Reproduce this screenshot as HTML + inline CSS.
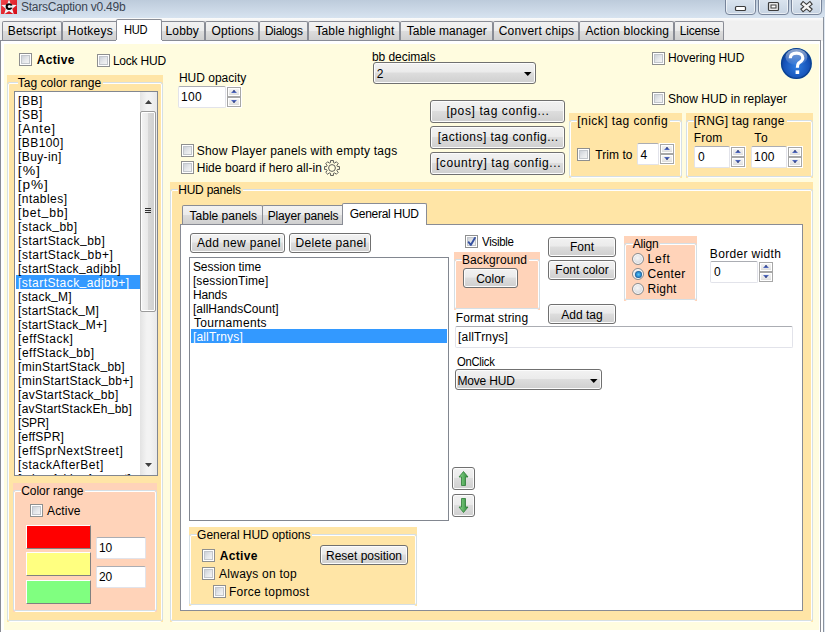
<!DOCTYPE html>
<html><head><meta charset="utf-8"><style>
*,*::before,*::after{margin:0;padding:0;box-sizing:border-box}
html,body{width:825px;height:632px;overflow:hidden;background:#fff;position:relative;font-family:"Liberation Sans",sans-serif}
.a{position:absolute}
.t{position:absolute;font-size:12px;line-height:14px;white-space:nowrap;color:#000}
.cb{position:absolute;width:13px;height:13px;border:1px solid #8e8f8f;background:#fff}
.cb::after{content:"";position:absolute;left:1px;top:1px;width:9px;height:9px;border:1px solid #c2c6cc;background:linear-gradient(135deg,#cdd1d8 0%,#e6e8eb 55%,#f4f4f4 100%)}
.btn{position:absolute;border:1px solid #707070;border-radius:3px;background:linear-gradient(#f2f2f2 0%,#ebebeb 45%,#dddddd 50%,#cfcfcf 100%);box-shadow:inset 0 0 0 1px #fcfcfc}
.ed{position:absolute;background:#fff;border:1px solid #e2e3ea;border-top-color:#abadb3;border-radius:2px}
.spn{position:absolute;border:1px solid #a6a6a6;background:#fff}
.spn i{position:absolute;left:0;right:0;background:linear-gradient(#f3f3f3,#dadada);border:1px solid #fff}
.sh{position:absolute;width:12px;border:1px solid #fff;background:linear-gradient(#f2f2f2,#e4e4e4 85%,#d6d6d6)}
.gb{position:absolute;border:1px solid;border-radius:2px}
.lb{position:absolute;background:#fff;border:1px solid #828790}
.tab{position:absolute;top:21px;height:19px;border:1px solid #898c95;border-bottom:none;border-radius:2px 2px 0 0;background:linear-gradient(#f2f2f2 0%,#ebebeb 50%,#dddddd 51%,#cfcfcf 100%)}
.rd{position:absolute;width:12px;height:12px;border-radius:50%;border:1px solid #8a8c8e;box-shadow:inset 0 0 0 1px #fbfbfb;background:radial-gradient(circle at 45% 40%,#f6f6f6 0%,#dcdde0 60%,#c4c6ca 100%)}
</style></head><body>
<div class="a" style="left:0;top:0;width:825px;height:18px;background:linear-gradient(#bdcbdb,#d7e3f0)"></div>
<div class="a" style="left:0;top:18px;width:825px;height:23px;background:linear-gradient(#fbfbfb 0px,#f6f6f6 2px,#f0f0f0 3px)"></div>
<div class="t" style="left:20.90px;top:-0.1px;letter-spacing:-0.222px;color:#3b4552">StarsCaption v0.49b</div>
<svg class="a" style="left:0px;top:0" width="18" height="15"><defs><linearGradient id="ig" x1="0" y1="0" x2="1" y2="1"><stop offset="0" stop-color="#f2494f"/><stop offset="1" stop-color="#d40a14"/></linearGradient></defs><rect x="1" y="0" width="16" height="14" fill="url(#ig)"/><polygon points="9.00,-0.60 11.00,4.85 16.80,5.07 12.23,8.65 13.82,14.23 9.00,11.00 4.18,14.23 5.77,8.65 1.20,5.07 7.00,4.85" fill="#eef6fa"/><circle cx="9" cy="6.6" r="3.4" fill="#050505"/><circle cx="9.3" cy="6.6" r="1.5" fill="#f0f0f0"/><rect x="10.3" y="5.6" width="2.6" height="2" fill="#eef6fa"/></svg>
<div class="a" style="left:725px;top:-3px;width:31px;height:18px;border:1px solid #77849a;border-radius:0 0 4px 4px;background:linear-gradient(#dde6f0,#c6d3e2);box-shadow:inset 0 0 0 1px rgba(255,255,255,0.6)"></div>
<div class="a" style="left:758px;top:-3px;width:31px;height:18px;border:1px solid #77849a;border-radius:0 0 4px 4px;background:linear-gradient(#dde6f0,#c6d3e2);box-shadow:inset 0 0 0 1px rgba(255,255,255,0.6)"></div>
<div class="a" style="left:791px;top:-3px;width:31px;height:18px;border:1px solid #77849a;border-radius:0 0 4px 4px;background:linear-gradient(#dde6f0,#c6d3e2);box-shadow:inset 0 0 0 1px rgba(255,255,255,0.6)"></div>
<svg class="a" style="left:725px;top:0" width="100" height="15"><rect x="10.5" y="6.5" width="10" height="4" rx="1" fill="#fff" stroke="#3c3c3c" stroke-width="1.2"/><rect x="43.5" y="2.5" width="10" height="8" rx="1" fill="#e8e8e8" stroke="#3c3c3c" stroke-width="1.2"/><rect x="46" y="5" width="5" height="3" fill="#fff" stroke="#3c3c3c" stroke-width="1"/><path d="M78.3,4 L84.7,9.3 M84.7,4 L78.3,9.3" stroke="#3c3c3c" stroke-width="4.6" stroke-linecap="square"/><path d="M78.3,4 L84.7,9.3 M84.7,4 L78.3,9.3" stroke="#f4f4f4" stroke-width="2.4" stroke-linecap="square"/></svg>
<div class="a" style="left:0;top:40px;width:821px;height:592px;border:1px solid #898c95;border-bottom:none;background:#fff"></div>
<div class="a" style="left:4px;top:44px;width:815px;height:586px;background:#fffcdf"></div>
<div class="a" style="left:823px;top:17px;width:1px;height:615px;background:#8a919c"></div>
<div class="a" style="left:824px;top:17px;width:1px;height:615px;background:#dfe8f2"></div>
<div class="tab" style="left:2px;width:60px"></div>
<div class="t" style="left:7.80px;top:24.2px;letter-spacing:0.200px;">Betscript</div>
<div class="tab" style="left:62px;width:56px"></div>
<div class="t" style="left:67.80px;top:24.2px;letter-spacing:0.267px;">Hotkeys</div>
<div class="tab" style="left:160px;width:45px"></div>
<div class="t" style="left:165.60px;top:24.2px;letter-spacing:0.100px;">Lobby</div>
<div class="tab" style="left:205px;width:54px"></div>
<div class="t" style="left:211.60px;top:24.2px;letter-spacing:0.133px;">Options</div>
<div class="tab" style="left:259px;width:49px"></div>
<div class="t" style="left:264.60px;top:24.2px;letter-spacing:-0.300px;transform:scaleX(0.9892);transform-origin:1px 0;">Dialogs</div>
<div class="tab" style="left:308px;width:92px"></div>
<div class="t" style="left:315.40px;top:24.2px;letter-spacing:0.150px;">Table highlight</div>
<div class="tab" style="left:400px;width:93px"></div>
<div class="t" style="left:406.70px;top:24.2px;letter-spacing:0.058px;">Table manager</div>
<div class="tab" style="left:493px;width:86px"></div>
<div class="t" style="left:498.80px;top:24.2px;letter-spacing:0.150px;">Convert chips</div>
<div class="tab" style="left:579px;width:95px"></div>
<div class="t" style="left:585.40px;top:24.2px;letter-spacing:0.207px;">Action blocking</div>
<div class="tab" style="left:674px;width:50px"></div>
<div class="t" style="left:679.70px;top:24.2px;letter-spacing:-0.183px;">License</div>
<div class="a" style="left:116px;top:19px;width:46px;height:22px;border:1px solid #898c95;border-bottom:none;border-radius:2px 2px 0 0;background:#fff"></div>
<div class="a" style="left:116px;top:40px;width:46px;height:4px;background:#fff"></div>
<div class="t" style="left:123.80px;top:23.0px;letter-spacing:-0.300px;transform:scaleX(0.9262);transform-origin:1px 0;">HUD</div>
<div class="cb" style="left:19px;top:53px"></div>
<div class="t" style="left:36.80px;top:53.0px;font-weight:bold;letter-spacing:0.320px;">Active</div>
<div class="cb" style="left:97px;top:54px"></div>
<div class="t" style="left:112.90px;top:54.0px;letter-spacing:-0.214px;">Lock HUD</div>
<div class="t" style="left:178.90px;top:70.6px;">HUD opacity</div>
<div class="ed" style="left:178px;top:86px;width:48px;height:22px"></div>
<div class="t" style="left:181.00px;top:89.8px;letter-spacing:0.300px;">100</div>
<div class="a" style="left:226px;top:86px;width:16px;height:22px;background:#fff"></div>
<div class="a" style="left:227px;top:87px;width:14px;height:20px;background:#a7a7a7"></div>
<div class="sh" style="left:228px;top:88px;height:8px"></div>
<div class="sh" style="left:228px;top:98px;height:8px"></div>
<svg class="a" style="left:226px;top:86px" width="16" height="22"><path d="M5,7 L8,4 L11,7Z" fill="#4f68c0"/><path d="M6.5,5.5 L8,4 L9.5,5.5Z" fill="#2b3566"/><path d="M5,14 L8,17 L11,14Z" fill="#4f68c0"/><path d="M6.5,15.5 L8,17 L9.5,15.5Z" fill="#2b3566"/></svg>
<div class="t" style="left:372.00px;top:49.7px;letter-spacing:-0.060px;">bb decimals</div>
<div class="btn" style="left:373px;top:62px;width:163px;height:22px"></div>
<div class="t" style="left:376.80px;top:66.7px;">2</div>
<svg class="a" style="left:523.7px;top:72px" width="8" height="4"><path d="M0,0 L7.5,0 L3.75,4Z" fill="#000"/></svg>
<div class="cb" style="left:652px;top:52px"></div>
<div class="t" style="left:667.90px;top:51.0px;letter-spacing:-0.082px;">Hovering HUD</div>
<div class="cb" style="left:652px;top:92px"></div>
<div class="t" style="left:667.90px;top:91.8px;letter-spacing:0.021px;">Show HUD in replayer</div>
<svg class="a" style="left:779px;top:46px" width="35" height="35" viewBox="0 0 35 35"><defs><radialGradient id="hg" cx="50%" cy="60%" r="60%"><stop offset="0" stop-color="#2f7de0"/><stop offset="0.7" stop-color="#1552b8"/><stop offset="1" stop-color="#0a3a8c"/></radialGradient><linearGradient id="hl" x1="0" y1="0" x2="0" y2="1"><stop offset="0" stop-color="#ffffff" stop-opacity="0.55"/><stop offset="1" stop-color="#ffffff" stop-opacity="0.05"/></linearGradient></defs><circle cx="17.4" cy="17.5" r="15.6" fill="#6fd0ff" opacity="0.6"/><circle cx="17.4" cy="17.5" r="14.8" fill="url(#hg)" stroke="#0b3f8e" stroke-width="1.3"/><ellipse cx="17.4" cy="11" rx="11" ry="8" fill="url(#hl)"/><path d="M11.3,12.2 C11.3,8.6 14,7.2 17.6,7.2 C21.4,7.2 23.8,9.2 23.8,12 C23.8,14.8 21.2,15.8 19.6,17.2 C18.6,18.2 18.4,19.2 18.4,21.8" stroke="#fff" stroke-width="3.2" fill="none"/><rect x="16.6" y="24.4" width="3.6" height="3.6" fill="#fff"/></svg>
<div class="cb" style="left:181px;top:144px"></div>
<div class="t" style="left:196.70px;top:144.3px;letter-spacing:0.233px;">Show Player panels with empty tags</div>
<div class="cb" style="left:181px;top:161px"></div>
<div class="t" style="left:196.70px;top:160.5px;letter-spacing:0.046px;">Hide board if hero all-in</div>
<svg class="a" style="left:323px;top:159px" width="18" height="18" viewBox="0 0 18 18"><g fill="none" stroke="#4a4a4a" stroke-width="0.9"><path d="M7.55,3.59 L7.55,1.54 L10.45,1.54 L10.45,3.59 L11.80,4.15 L13.25,2.70 L15.30,4.75 L13.85,6.20 L14.41,7.55 L16.46,7.55 L16.46,10.45 L14.41,10.45 L13.85,11.80 L15.30,13.25 L13.25,15.30 L11.80,13.85 L10.45,14.41 L10.45,16.46 L7.55,16.46 L7.55,14.41 L6.20,13.85 L4.75,15.30 L2.70,13.25 L4.15,11.80 L3.59,10.45 L1.54,10.45 L1.54,7.55 L3.59,7.55 L4.15,6.20 L2.70,4.75 L4.75,2.70 L6.20,4.15Z"/><circle cx="9" cy="9" r="3.4"/></g></svg>
<div class="btn" style="left:430px;top:100px;width:135px;height:23px"></div>
<div class="t" style="left:446.40px;top:104.4px;letter-spacing:0.611px;">[pos] tag config...</div>
<div class="btn" style="left:430px;top:126px;width:135px;height:23px"></div>
<div class="t" style="left:437.80px;top:130.4px;letter-spacing:0.468px;">[actions] tag config...</div>
<div class="btn" style="left:430px;top:152px;width:135px;height:23px"></div>
<div class="t" style="left:435.90px;top:156.4px;letter-spacing:0.600px;">[country] tag config...</div>
<div class="a" style="left:569px;top:113px;width:113px;height:65px;background:#ffe5a6"></div>
<div class="gb" style="left:570px;top:121px;width:111px;height:57px;border-color:#fff"></div>
<div class="gb" style="left:569px;top:120px;width:113px;height:57px;border-color:#d5dfe5"></div>
<div class="t" style="left:577.30px;top:114.4px;letter-spacing:0.431px;background:#ffe5a6;padding:0 2px 0 0">[nick] tag config</div>
<div class="cb" style="left:577px;top:148px"></div>
<div class="t" style="left:595.20px;top:147.5px;letter-spacing:0.067px;">Trim to</div>
<div class="ed" style="left:637px;top:143px;width:22px;height:22px"></div>
<div class="t" style="left:640.40px;top:147.5px;">4</div>
<div class="a" style="left:659px;top:143px;width:16px;height:22px;background:#fff"></div>
<div class="a" style="left:660px;top:144px;width:14px;height:20px;background:#a7a7a7"></div>
<div class="sh" style="left:661px;top:145px;height:8px"></div>
<div class="sh" style="left:661px;top:155px;height:8px"></div>
<svg class="a" style="left:659px;top:143px" width="16" height="22"><path d="M5,7 L8,4 L11,7Z" fill="#4f68c0"/><path d="M6.5,5.5 L8,4 L9.5,5.5Z" fill="#2b3566"/><path d="M5,14 L8,17 L11,14Z" fill="#4f68c0"/><path d="M6.5,15.5 L8,17 L9.5,15.5Z" fill="#2b3566"/></svg>
<div class="a" style="left:686px;top:113px;width:127px;height:65px;background:#ffe5a6"></div>
<div class="gb" style="left:687px;top:121px;width:125px;height:57px;border-color:#fff"></div>
<div class="gb" style="left:686px;top:120px;width:127px;height:57px;border-color:#d5dfe5"></div>
<div class="t" style="left:693.70px;top:114.2px;letter-spacing:0.243px;background:#ffe5a6;padding:0 2px 0 0">[RNG] tag range</div>
<div class="t" style="left:693.80px;top:131.4px;letter-spacing:0.133px;">From</div>
<div class="t" style="left:754.20px;top:131.4px;letter-spacing:0.700px;">To</div>
<div class="ed" style="left:694px;top:146px;width:36px;height:22px"></div>
<div class="t" style="left:698.00px;top:149.9px;">0</div>
<div class="a" style="left:730px;top:146px;width:16px;height:22px;background:#fff"></div>
<div class="a" style="left:731px;top:147px;width:14px;height:20px;background:#a7a7a7"></div>
<div class="sh" style="left:732px;top:148px;height:8px"></div>
<div class="sh" style="left:732px;top:158px;height:8px"></div>
<svg class="a" style="left:730px;top:146px" width="16" height="22"><path d="M5,7 L8,4 L11,7Z" fill="#4f68c0"/><path d="M6.5,5.5 L8,4 L9.5,5.5Z" fill="#2b3566"/><path d="M5,14 L8,17 L11,14Z" fill="#4f68c0"/><path d="M6.5,15.5 L8,17 L9.5,15.5Z" fill="#2b3566"/></svg>
<div class="ed" style="left:751px;top:146px;width:36px;height:22px"></div>
<div class="t" style="left:754.10px;top:149.9px;letter-spacing:0.150px;">100</div>
<div class="a" style="left:787px;top:146px;width:16px;height:22px;background:#fff"></div>
<div class="a" style="left:788px;top:147px;width:14px;height:20px;background:#a7a7a7"></div>
<div class="sh" style="left:789px;top:148px;height:8px"></div>
<div class="sh" style="left:789px;top:158px;height:8px"></div>
<svg class="a" style="left:787px;top:146px" width="16" height="22"><path d="M5,7 L8,4 L11,7Z" fill="#4f68c0"/><path d="M6.5,5.5 L8,4 L9.5,5.5Z" fill="#2b3566"/><path d="M5,14 L8,17 L11,14Z" fill="#4f68c0"/><path d="M6.5,15.5 L8,17 L9.5,15.5Z" fill="#2b3566"/></svg>
<div class="a" style="left:7px;top:75px;width:156px;height:547px;background:#ffe5a6"></div>
<div class="gb" style="left:8px;top:83px;width:154px;height:539px;border-color:#fff"></div>
<div class="gb" style="left:7px;top:82px;width:156px;height:539px;border-color:#d5dfe5"></div>
<div class="t" style="left:17.70px;top:76.0px;letter-spacing:0.050px;background:#ffe5a6;padding:0 2px 0 0">Tag color range</div>
<div class="lb" style="left:14px;top:91px;width:144px;height:385px;overflow:hidden">
<div class="a" style="left:1px;top:183px;width:124px;height:14px;background:#3399ff"></div>
<div class="t" style="left:3.10px;top:1.5px;letter-spacing:0.500px;">[BB]</div>
<div class="t" style="left:3.10px;top:15.5px;letter-spacing:0.500px;">[SB]</div>
<div class="t" style="left:3.10px;top:29.5px;letter-spacing:0.800px;transform:scaleX(1.0471);transform-origin:1px 0;">[Ante]</div>
<div class="t" style="left:3.10px;top:43.5px;letter-spacing:0.417px;">[BB100]</div>
<div class="t" style="left:3.10px;top:57.5px;letter-spacing:0.357px;">[Buy-in]</div>
<div class="t" style="left:3.10px;top:71.5px;letter-spacing:0.800px;transform:scaleX(1.1705);transform-origin:1px 0;">[%]</div>
<div class="t" style="left:3.10px;top:85.5px;letter-spacing:0.800px;transform:scaleX(1.1352);transform-origin:1px 0;">[p%]</div>
<div class="t" style="left:3.10px;top:99.5px;letter-spacing:0.438px;">[ntables]</div>
<div class="t" style="left:3.10px;top:113.5px;letter-spacing:0.800px;transform:scaleX(1.0147);transform-origin:1px 0;">[bet<span style="position:relative;top:-2px">_</span>bb]</div>
<div class="t" style="left:3.10px;top:127.5px;letter-spacing:0.478px;">[stack<span style="position:relative;top:-2px">_</span>bb]</div>
<div class="t" style="left:3.10px;top:141.5px;letter-spacing:0.479px;">[startStack<span style="position:relative;top:-2px">_</span>bb]</div>
<div class="t" style="left:3.10px;top:155.5px;letter-spacing:0.507px;">[startStack<span style="position:relative;top:-2px">_</span>bb+]</div>
<div class="t" style="left:3.10px;top:169.5px;letter-spacing:0.382px;">[startStack<span style="position:relative;top:-2px">_</span>adjbb]</div>
<div class="t" style="left:3.10px;top:183.5px;letter-spacing:0.439px;color:#fff;">[startStack<span style="position:relative;top:-2px">_</span>adjbb+]</div>
<div class="t" style="left:3.10px;top:197.5px;letter-spacing:0.275px;">[stack<span style="position:relative;top:-2px">_</span>M]</div>
<div class="t" style="left:3.10px;top:211.5px;letter-spacing:0.315px;">[startStack<span style="position:relative;top:-2px">_</span>M]</div>
<div class="t" style="left:3.10px;top:225.5px;letter-spacing:0.357px;">[startStack<span style="position:relative;top:-2px">_</span>M+]</div>
<div class="t" style="left:3.10px;top:239.5px;letter-spacing:0.556px;">[effStack]</div>
<div class="t" style="left:3.10px;top:253.5px;letter-spacing:0.508px;">[effStack<span style="position:relative;top:-2px">_</span>bb]</div>
<div class="t" style="left:3.10px;top:267.5px;letter-spacing:0.306px;">[minStartStack<span style="position:relative;top:-2px">_</span>bb]</div>
<div class="t" style="left:3.10px;top:281.5px;letter-spacing:0.367px;">[minStartStack<span style="position:relative;top:-2px">_</span>bb+]</div>
<div class="t" style="left:3.10px;top:295.5px;letter-spacing:0.337px;">[avStartStack<span style="position:relative;top:-2px">_</span>bb]</div>
<div class="t" style="left:3.10px;top:309.5px;letter-spacing:0.239px;">[avStartStackEh<span style="position:relative;top:-2px">_</span>bb]</div>
<div class="t" style="left:3.10px;top:323.5px;letter-spacing:-0.175px;">[SPR]</div>
<div class="t" style="left:3.10px;top:337.5px;letter-spacing:0.186px;">[effSPR]</div>
<div class="t" style="left:3.10px;top:351.5px;letter-spacing:0.559px;">[effSprNextStreet]</div>
<div class="t" style="left:3.10px;top:365.5px;letter-spacing:0.507px;">[stackAfterBet]</div>
<div class="t" style="left:3.10px;top:379.5px;">[rebuyAddonAmount]</div>
<div class="a" style="left:125px;top:0;width:17px;height:383px;background:linear-gradient(90deg,#e3e3e3,#f3f3f3 40%,#f3f3f3 60%,#e9e9e9)"></div>
<svg class="a" style="left:125px;top:0" width="17" height="383"><path d="M5,12 L8.5,8 L12,12Z" fill="#404040"/><path d="M5,371 L8.5,375 L12,371Z" fill="#404040"/></svg>
<div class="a" style="left:125px;top:19px;width:16px;height:201px;border:1px solid #9b9b9b;border-radius:2px;background:linear-gradient(90deg,#f4f4f4,#e9e9e9 50%,#d8d8d8 51%,#cfcfcf);box-shadow:inset 0 0 0 1px #fff"></div>
<svg class="a" style="left:125px;top:115px" width="16" height="10"><path d="M5,1.5 h6 M5,3.5 h6 M5,5.5 h6" stroke="#303030" stroke-width="1"/></svg>
</div>
<div class="a" style="left:13px;top:483px;width:144px;height:129px;background:#ffd3b9"></div>
<div class="gb" style="left:14px;top:491px;width:142px;height:121px;border-color:#fff"></div>
<div class="gb" style="left:13px;top:490px;width:144px;height:121px;border-color:#d5dfe5"></div>
<div class="t" style="left:21.20px;top:484.0px;letter-spacing:-0.040px;background:#ffd3b9;padding:0 2px 0 0">Color range</div>
<div class="cb" style="left:30px;top:504px"></div>
<div class="t" style="left:47.00px;top:503.6px;letter-spacing:0.160px;">Active</div>
<div class="a" style="left:26px;top:525px;width:65px;height:24px;background:#ff0000;border:1px solid;border-color:#fff #808080 #808080 #fff"></div>
<div class="a" style="left:26px;top:552px;width:65px;height:24px;background:#ffff80;border:1px solid;border-color:#fff #808080 #808080 #fff"></div>
<div class="a" style="left:26px;top:580px;width:65px;height:24px;background:#80ff80;border:1px solid;border-color:#fff #808080 #808080 #fff"></div>
<div class="ed" style="left:96px;top:537px;width:50px;height:22px"></div>
<div class="t" style="left:98.90px;top:541.0px;">10</div>
<div class="ed" style="left:96px;top:566px;width:50px;height:22px"></div>
<div class="t" style="left:98.90px;top:569.8px;">20</div>
<div class="a" style="left:170px;top:182px;width:643px;height:440px;background:#ffe5a6"></div>
<div class="gb" style="left:171px;top:190px;width:641px;height:432px;border-color:#fff"></div>
<div class="gb" style="left:170px;top:189px;width:643px;height:432px;border-color:#d5dfe5"></div>
<div class="t" style="left:178.20px;top:182.7px;letter-spacing:-0.222px;background:#ffe5a6;padding:0 2px 0 0">HUD panels</div>
<div class="a" style="left:180px;top:224px;width:623px;height:387px;border:1px solid #898c95;background:#fff"></div>
<div class="tab" style="top:205px;left:182px;width:81px"></div>
<div class="t" style="left:189.60px;top:208.5px;">Table panels</div>
<div class="tab" style="top:205px;left:262px;width:82px"></div>
<div class="t" style="left:267.70px;top:208.5px;letter-spacing:-0.158px;">Player panels</div>
<div class="a" style="left:342px;top:203px;width:85px;height:22px;border:1px solid #898c95;border-bottom:none;border-radius:2px 2px 0 0;background:#fff"></div>
<div class="t" style="left:349.70px;top:207.0px;letter-spacing:-0.270px;">General HUD</div>
<div class="btn" style="left:190px;top:233px;width:95px;height:20px"></div>
<div class="t" style="left:196.90px;top:236.1px;letter-spacing:0.342px;">Add new panel</div>
<div class="btn" style="left:289px;top:233px;width:82px;height:20px"></div>
<div class="t" style="left:295.60px;top:236.1px;letter-spacing:0.282px;">Delete panel</div>
<div class="lb" style="left:189px;top:257px;width:260px;height:264px"></div>
<div class="a" style="left:191px;top:329px;width:256px;height:14px;background:#3399ff"></div>
<div class="t" style="left:192.90px;top:259.5px;letter-spacing:-0.045px;">Session time</div>
<div class="t" style="left:192.90px;top:273.5px;letter-spacing:0.150px;">[sessionTime]</div>
<div class="t" style="left:192.90px;top:287.5px;letter-spacing:-0.100px;">Hands</div>
<div class="t" style="left:192.90px;top:301.5px;letter-spacing:0.029px;">[allHandsCount]</div>
<div class="t" style="left:193.90px;top:315.5px;letter-spacing:0.330px;">Tournaments</div>
<div class="t" style="left:192.90px;top:329.5px;letter-spacing:0.178px;color:#fff">[allTrnys]</div>
<div class="cb" style="left:465px;top:235px"></div>
<svg class="a" style="left:465px;top:235px" width="13" height="13"><path d="M3.6,7.2 L5.8,10 L9.9,2.9" stroke="#3550a0" stroke-width="1.9" fill="none" stroke-linecap="round" stroke-linejoin="round"/></svg>
<div class="t" style="left:481.60px;top:234.7px;letter-spacing:-0.300px;transform:scaleX(0.9578);transform-origin:0px 0;">Visible</div>
<div class="a" style="left:454px;top:252px;width:86px;height:58px;background:#ffd3b9"></div>
<div class="gb" style="left:455px;top:260px;width:84px;height:50px;border-color:#fff"></div>
<div class="gb" style="left:454px;top:259px;width:86px;height:50px;border-color:#d5dfe5"></div>
<div class="t" style="left:461.90px;top:252.8px;letter-spacing:0.111px;background:#ffd3b9;padding:0 2px 0 0">Background</div>
<div class="btn" style="left:463px;top:268px;width:55px;height:20px"></div>
<div class="t" style="left:463px;top:271.5px;width:55px;text-align:center">Color</div>
<div class="btn" style="left:548px;top:237px;width:68px;height:20px"></div>
<div class="t" style="left:548px;top:240.0px;width:68px;text-align:center">Font</div>
<div class="btn" style="left:548px;top:260px;width:68px;height:20px"></div>
<div class="t" style="left:548px;top:263.0px;width:68px;text-align:center">Font color</div>
<div class="btn" style="left:548px;top:304px;width:68px;height:20px"></div>
<div class="t" style="left:548px;top:307.5px;width:68px;text-align:center">Add tag</div>
<div class="t" style="left:455.70px;top:310.7px;letter-spacing:0.142px;">Format string</div>
<div class="ed" style="left:455px;top:326px;width:338px;height:22px"></div>
<div class="t" style="left:458.10px;top:330.0px;letter-spacing:0.167px;">[allTrnys]</div>
<div class="t" style="left:457.10px;top:354.6px;letter-spacing:-0.300px;transform:scaleX(0.9403);transform-origin:0px 0;">OnClick</div>
<div class="btn" style="left:455px;top:369px;width:147px;height:21px"></div>
<div class="t" style="left:457.40px;top:373.6px;letter-spacing:-0.157px;">Move HUD</div>
<svg class="a" style="left:589.7px;top:379px" width="8" height="4"><path d="M0,0 L7.5,0 L3.75,4Z" fill="#000"/></svg>
<div class="a" style="left:624px;top:236px;width:73px;height:65px;background:#ffd3b9"></div>
<div class="gb" style="left:625px;top:244px;width:71px;height:57px;border-color:#fff"></div>
<div class="gb" style="left:624px;top:243px;width:73px;height:57px;border-color:#d5dfe5"></div>
<div class="t" style="left:632.70px;top:237.0px;letter-spacing:-0.200px;background:#ffd3b9;padding:0 2px 0 0">Align</div>
<div class="rd" style="left:632px;top:253px"></div>
<div class="rd" style="left:632px;top:268px"></div>
<div class="a" style="left:634.5px;top:270.5px;width:7px;height:7px;border-radius:50%;background:radial-gradient(circle at 50% 50%,#5cc8f5 0%,#2a8ad0 45%,#0d3d70 85%)"></div>
<div class="rd" style="left:632px;top:283px"></div>
<div class="t" style="left:647.60px;top:251.5px;letter-spacing:0.767px;">Left</div>
<div class="t" style="left:647.60px;top:266.5px;letter-spacing:0.320px;">Center</div>
<div class="t" style="left:647.60px;top:281.5px;letter-spacing:0.200px;">Right</div>
<div class="t" style="left:709.80px;top:246.5px;letter-spacing:0.345px;">Border width</div>
<div class="ed" style="left:710px;top:261px;width:48px;height:22px"></div>
<div class="t" style="left:714.00px;top:264.6px;">0</div>
<div class="a" style="left:758px;top:261px;width:16px;height:22px;background:#fff"></div>
<div class="a" style="left:759px;top:262px;width:14px;height:20px;background:#a7a7a7"></div>
<div class="sh" style="left:760px;top:263px;height:8px"></div>
<div class="sh" style="left:760px;top:273px;height:8px"></div>
<svg class="a" style="left:758px;top:261px" width="16" height="22"><path d="M5,7 L8,4 L11,7Z" fill="#4f68c0"/><path d="M6.5,5.5 L8,4 L9.5,5.5Z" fill="#2b3566"/><path d="M5,14 L8,17 L11,14Z" fill="#4f68c0"/><path d="M6.5,15.5 L8,17 L9.5,15.5Z" fill="#2b3566"/></svg>
<div class="btn" style="left:452px;top:467px;width:23px;height:23px"></div>
<svg class="a" style="left:452px;top:467px" width="23" height="23"><defs><linearGradient id="ga" x1="0" x2="1"><stop offset="0" stop-color="#8fd98f"/><stop offset="1" stop-color="#2e8b3a"/></linearGradient></defs><path d="M11.5,4.5 L16,10 L13.5,10 L13.5,18.5 L9.5,18.5 L9.5,10 L7,10Z" fill="url(#ga)" stroke="#2c7a35" stroke-width="0.8"/></svg>
<div class="btn" style="left:452px;top:494px;width:23px;height:23px"></div>
<svg class="a" style="left:452px;top:494px" width="23" height="23"><path d="M11.5,18.5 L16,13 L13.5,13 L13.5,4.5 L9.5,4.5 L9.5,13 L7,13Z" fill="url(#ga)" stroke="#2c7a35" stroke-width="0.8"/></svg>
<div class="a" style="left:189px;top:527px;width:228px;height:79px;background:#ffe5a6"></div>
<div class="gb" style="left:190px;top:535px;width:226px;height:71px;border-color:#fff"></div>
<div class="gb" style="left:189px;top:534px;width:228px;height:71px;border-color:#d5dfe5"></div>
<div class="t" style="left:197.10px;top:528.1px;letter-spacing:-0.039px;background:#ffe5a6;padding:0 2px 0 0">General HUD options</div>
<div class="cb" style="left:202px;top:549px"></div>
<div class="t" style="left:219.70px;top:548.5px;font-weight:bold;letter-spacing:0.360px;">Active</div>
<div class="btn" style="left:320px;top:545px;width:88px;height:20px"></div>
<div class="t" style="left:320px;top:548.5px;width:88px;text-align:center">Reset position</div>
<div class="cb" style="left:202px;top:567px"></div>
<div class="t" style="left:219.10px;top:567.0px;letter-spacing:0.233px;">Always on top</div>
<div class="cb" style="left:213px;top:585px"></div>
<div class="t" style="left:228.90px;top:584.6px;letter-spacing:0.283px;">Force topmost</div>
</body></html>
